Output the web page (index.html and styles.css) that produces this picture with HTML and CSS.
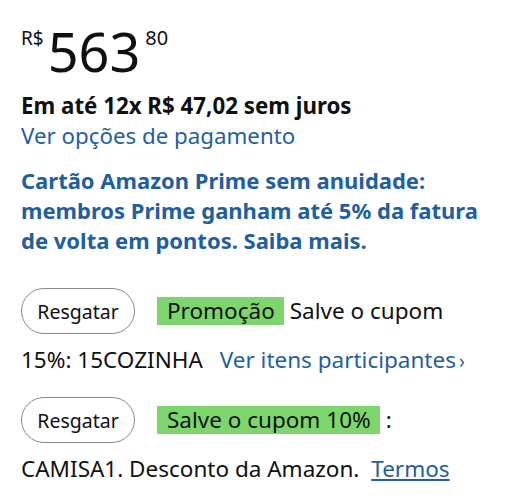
FILE: index.html
```html
<!DOCTYPE html>
<html lang="pt-BR">
<head>
<meta charset="utf-8">
<link rel="stylesheet" href="styles.css">
</head>
<body>
<div class="page">
  <div class="price">
    <span class="cur">R$</span><span class="whole">563</span><span class="frac">80</span>
  </div>
  <div class="install">Em até 12x R$ 47,02 sem juros</div>
  <a class="link pay">Ver opções de pagamento</a>
  <p class="card">Cartão Amazon Prime sem anuidade: membros Prime ganham até 5% da fatura de volta em pontos. Saiba mais.</p>
  <div class="promo">
    <div class="row">
      <button class="btn">Resgatar</button>
      <span class="hl">Promoção</span>
      <span class="txt">Salve o cupom</span>
    </div>
    <div class="line">15%: 15COZINHA <a class="link items">Ver itens participantes<span class="chev">›</span></a></div>
  </div>
  <div class="promo second">
    <div class="row">
      <button class="btn">Resgatar</button>
      <span class="hl">Salve o cupom 10%</span>
      <span class="txt">:</span>
    </div>
    <div class="line">CAMISA1. Desconto da Amazon. <a class="link terms">Termos</a></div>
  </div>
</div>
</body>
</html>
```
FILE: styles.css
```css
html, body { margin: 0; padding: 0; background: #fff; }
body { font-family: "Noto Sans", "Liberation Sans", sans-serif; color: #0f1111; }
.page { padding: 20px 21px 0 21px; display: flex; flex-direction: column; align-items: flex-start; }
.price { display: flex; align-items: flex-start; height: 62px; }
.cur { font-size: 19px; line-height: 18px; margin-top: 9px; }
.whole { font-size: 54px; line-height: 62px; margin-left: 4px; }
.frac { font-size: 20px; line-height: 18px; margin-top: 9px; margin-left: 5px; }
.install { font-weight: 700; font-size: 22.3px; line-height: 24px; margin-top: 12px; }
.link { color: #1f5f9f; text-decoration: none; }
.pay { font-size: 22.3px; line-height: 28px; margin-top: 4px; }
.card { color: #1f5f9f; font-weight: 700; font-size: 22px; line-height: 30px; margin: 15px 0 0 0; width: 480px; }
.promo { display: flex; flex-direction: column; margin-top: 33px; font-size: 22.5px; }
.second { margin-top: 22px; }
.row { display: flex; align-items: center; height: 46px; }
.btn { font-family: inherit; font-size: 19.5px; color: #0f1111; background: #fff; border: 1px solid #888c8c; border-radius: 23px; width: 114px; height: 46px; padding: 0; margin-right: 22px; }
.hl { background: #7cd66c; padding: 0 9px 0 10px; line-height: 28px; margin-right: 6px; }
.txt { line-height: 28px; }
.line { line-height: 28px; margin-top: 12px; }
.items { margin-left: 11px; }
.chev { margin-left: 3px; font-size: 19px; }
.terms { text-decoration: underline; margin-left: 6px; }
```
